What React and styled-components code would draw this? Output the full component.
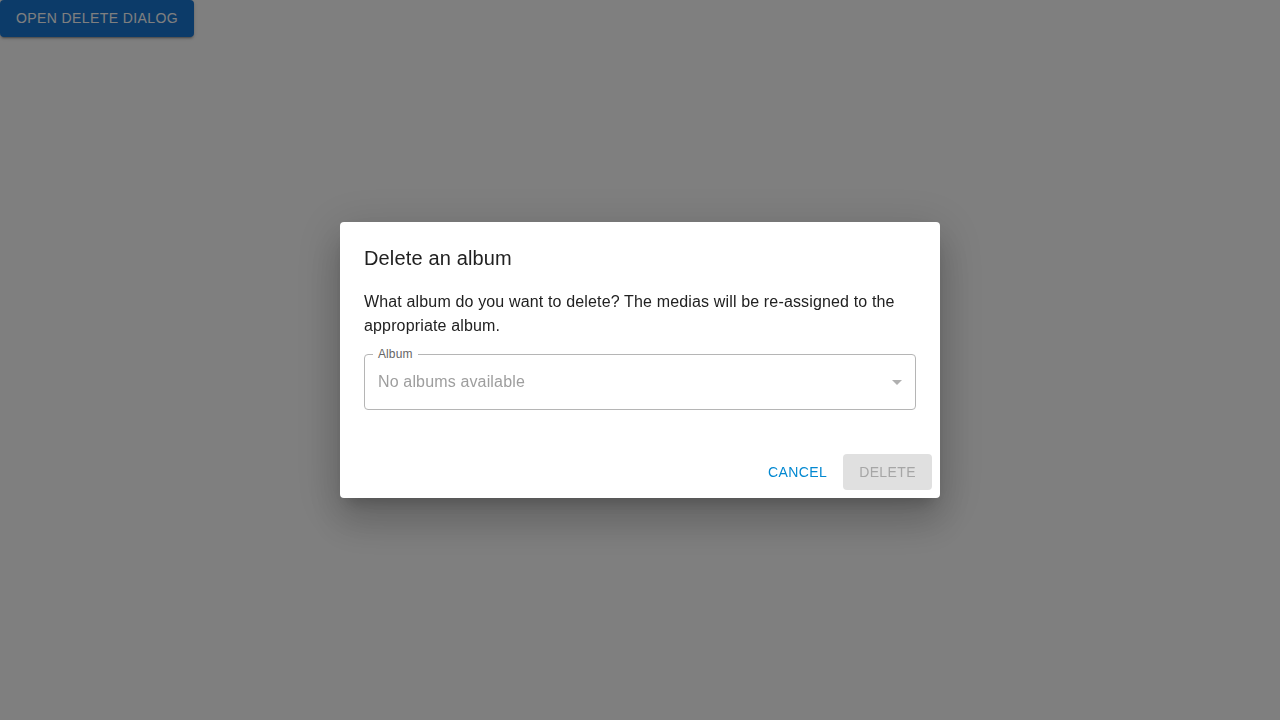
import React, { useState } from 'react';
import styled, { createGlobalStyle } from 'styled-components';

const GlobalStyle = createGlobalStyle`
  html, body {
    margin: 0;
    padding: 0;
    background: #ffffff;
    font-family: "Liberation Sans", Arial, sans-serif;
  }
`;

const Page = styled.div`
  width: 1280px;
  height: 720px;
`;

const TriggerButton = styled.button`
  display: inline-block;
  padding: 6px 16px;
  line-height: 24.5px;
  border: 0;
  border-radius: 4px;
  background: #1976d2;
  color: #ffffff;
  font-family: inherit;
  font-size: 14px;
  letter-spacing: 0.4px;
  text-transform: uppercase;
  box-shadow: 0 3px 1px -2px rgba(0, 0, 0, 0.2), 0 2px 2px 0 rgba(0, 0, 0, 0.14),
    0 1px 5px 0 rgba(0, 0, 0, 0.12);
  cursor: pointer;
`;

const Backdrop = styled.div`
  position: fixed;
  inset: 0;
  background: rgba(0, 0, 0, 0.5);
  display: flex;
  align-items: center;
  justify-content: center;
`;

const Dialog = styled.div`
  width: 600px;
  background: #ffffff;
  border-radius: 4px;
  color: #212121;
  box-shadow: 0 11px 15px -7px rgba(0, 0, 0, 0.2), 0 24px 38px 3px rgba(0, 0, 0, 0.14),
    0 9px 46px 8px rgba(0, 0, 0, 0.12);
  display: flex;
  flex-direction: column;
`;

const Title = styled.h2`
  margin: 0;
  padding: 20px 24px 16px;
  font-size: 20px;
  font-weight: 400;
  line-height: 32px;
  letter-spacing: 0.15px;
`;

const Content = styled.div`
  padding: 0 24px 36px;
  display: flex;
  flex-direction: column;
  gap: 16px;
`;

const Text = styled.p`
  margin: 0;
  font-size: 16px;
  line-height: 24px;
  letter-spacing: 0.15px;
`;

const Field = styled.div`
  position: relative;
  height: 56px;
  box-sizing: border-box;
  border: 1px solid #b5b5b5;
  border-radius: 4px;
  display: flex;
  align-items: center;
  padding: 0 6px 0 13px;
`;

const FieldLabel = styled.span`
  position: absolute;
  top: -8px;
  left: 8px;
  padding: 0 5px;
  background: #ffffff;
  font-size: 12px;
  line-height: 15px;
  color: #666666;
  letter-spacing: 0.1px;
`;

const Placeholder = styled.span`
  flex: 1;
  font-size: 16px;
  color: #9e9e9e;
  letter-spacing: 0.15px;
`;

const Arrow = styled.svg`
  width: 24px;
  height: 24px;
  fill: #b0b0b0;
`;

const Actions = styled.div`
  display: flex;
  justify-content: flex-end;
  gap: 8px;
  padding: 8px;
`;

const ActionButton = styled.button`
  height: 36px;
  padding: 0 ${(p) => (p.$contained ? 16 : 8)}px;
  border: 0;
  border-radius: 4px;
  background: ${(p) => (p.$contained ? '#e0e0e0' : 'transparent')};
  color: ${(p) => (p.$disabled ? '#a6a6a6' : '#0288d1')};
  font-family: inherit;
  font-size: 14px;
  letter-spacing: 0.4px;
  text-transform: uppercase;
  cursor: ${(p) => (p.$disabled ? 'default' : 'pointer')};
`;

export default function App() {
  const [open, setOpen] = useState(true);
  return (
    <Page>
      <GlobalStyle />
      <TriggerButton onClick={() => setOpen(true)}>Open delete dialog</TriggerButton>
      {open && (
        <Backdrop>
          <Dialog>
            <Title>Delete an album</Title>
            <Content>
              <Text>
                What album do you want to delete? The medias will be re-assigned to the
                appropriate album.
              </Text>
              <Field>
                <FieldLabel>Album</FieldLabel>
                <Placeholder>No albums available</Placeholder>
                <Arrow viewBox="0 0 24 24">
                  <path d="M7 10l5 5 5-5z" />
                </Arrow>
              </Field>
            </Content>
            <Actions>
              <ActionButton onClick={() => setOpen(false)}>Cancel</ActionButton>
              <ActionButton $contained $disabled disabled>
                Delete
              </ActionButton>
            </Actions>
          </Dialog>
        </Backdrop>
      )}
    </Page>
  );
}
